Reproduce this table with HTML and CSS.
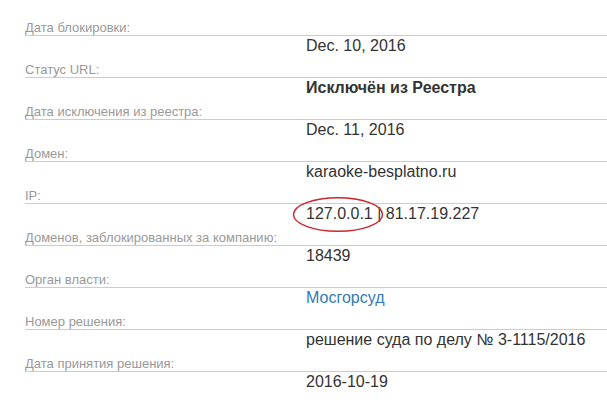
FILE: index.html
```html
<!DOCTYPE html>
<html lang="ru">
<head>
<meta charset="utf-8">
<link rel="stylesheet" href="styles.css">
</head>
<body>
<div class="details">
  <div class="row"><div class="label">Дата блокировки:</div><div class="value">Dec. 10, 2016</div></div>
  <div class="row"><div class="label">Статус URL:</div><div class="value"><b>Исключён из Реестра</b></div></div>
  <div class="row"><div class="label">Дата исключения из реестра:</div><div class="value">Dec. 11, 2016</div></div>
  <div class="row"><div class="label">Домен:</div><div class="value">karaoke-besplatno.ru</div></div>
  <div class="row"><div class="label">IP:</div><div class="value ip">127.0.0.1 | 81.17.19.227<svg class="mark" width="92" height="37" viewBox="0 0 92 37"><ellipse cx="46" cy="18.5" rx="44.5" ry="16.8" fill="none" stroke="#c8252d" stroke-width="1.4"/></svg></div></div>
  <div class="row"><div class="label">Доменов, заблокированных за компанию:</div><div class="value">18439</div></div>
  <div class="row"><div class="label">Орган власти:</div><div class="value"><a class="link" href="#">Мосгорсуд</a></div></div>
  <div class="row"><div class="label">Номер решения:</div><div class="value">решение суда по делу № 3-1115/2016</div></div>
  <div class="row"><div class="label">Дата принятия решения:</div><div class="value">2016-10-19</div></div>
</div>
</body>
</html>
```
FILE: styles.css
```css
html, body {
  margin: 0;
  padding: 0;
  background: #fff;
}
body {
  font-family: "Liberation Sans", Arial, sans-serif;
  overflow: hidden;
}
.details {
  padding: 21px 0 0 25px;
}
.row {
  margin-bottom: 7px;
}
.label {
  font-size: 13px;
  line-height: 14px;
  color: #999;
  border-bottom: 1px solid #ccc;
}
.value {
  margin-left: 281px;
  font-size: 16px;
  line-height: 20px;
  color: #333;
}
.value b {
  font-weight: bold;
}
.ip {
  position: relative;
}
.mark {
  position: absolute;
  left: -14px;
  top: -8px;
}
.link {
  color: #337ab7;
  text-decoration: none;
}
```
